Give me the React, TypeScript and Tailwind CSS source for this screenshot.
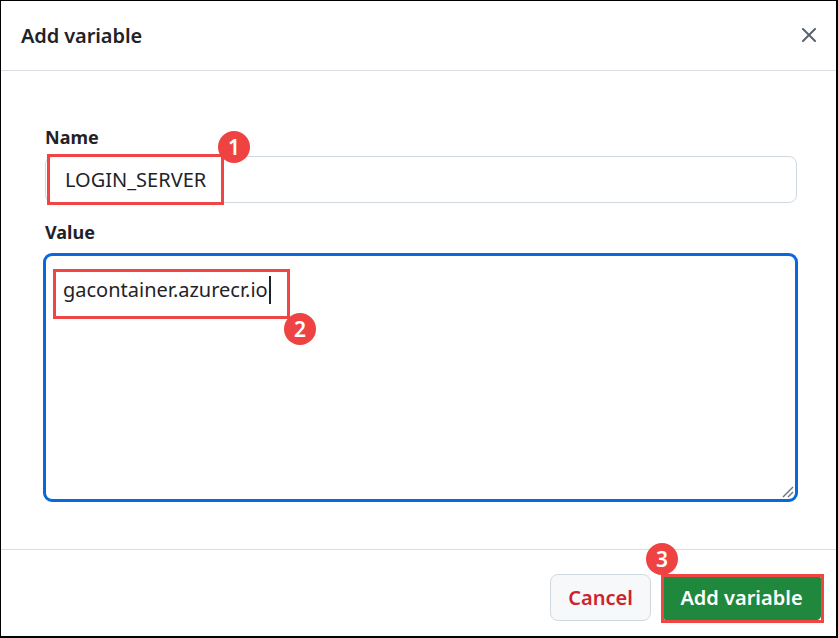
import React from "react";

function Badge({ n, cls }: { n: string; cls: string }) {
  return (
    <div
      className={
        "absolute w-[32px] h-[32px] rounded-full bg-[#ef4343] text-white flex items-center justify-center text-[21px] font-semibold leading-none " +
        cls
      }
    >
      {n}
    </div>
  );
}

export default function App() {
  return (
    <div className="relative w-[838px] h-[638px] bg-white border-l border-t border-r-2 border-b-2 border-black flex flex-col font-['Noto_Sans',sans-serif] text-[#1f2328] overflow-hidden">
      {/* Header */}
      <div className="h-[70px] shrink-0 border-b border-[#d8dee4] flex items-center justify-between pl-[20px] pr-[20px]">
        <h1 className="text-[20px] font-semibold leading-[28px] tracking-[-0.1px]">Add variable</h1>
        <svg width="14" height="14" viewBox="0 0 14 14" className="mt-[-2px]">
          <path d="M1 1 L13 13 M13 1 L1 13" stroke="#59636e" strokeWidth="2" strokeLinecap="round" />
        </svg>
      </div>

      {/* Body */}
      <div className="flex-1 flex flex-col pl-[44px] pr-[39px] pt-[54px]">
        <label className="text-[18px] font-bold leading-[24px]">Name</label>
        <div className="mt-[7px] h-[47px] rounded-[8px] border border-[#d1d9e0] bg-white flex items-center pl-[19px] text-[20px]">
          LOGIN_SERVER
        </div>
        <label className="mt-[17px] text-[18px] font-bold leading-[24px]">Value</label>
        <div className="mt-[9px] -ml-[2px] -mr-[1px] h-[249px] rounded-[9px] border-[3px] border-[#0969da] bg-white relative">
          <div className="pl-[17px] pt-[19px] text-[20px] leading-[30px] flex items-center">
            <span>gacontainer.azurecr.io</span>
            <span className="inline-block w-[2px] h-[28px] bg-[#1f2328] ml-[1px]" />
          </div>
          <svg className="absolute right-[1px] bottom-[1px]" width="13" height="13" viewBox="0 0 13 13">
            <path d="M2 12 L12 2" stroke="#6e7781" strokeWidth="1.5" />
            <path d="M7 12 L12 7" stroke="#6e7781" strokeWidth="1.5" />
          </svg>
        </div>
      </div>

      {/* Footer */}
      <div className="h-[87px] shrink-0 border-t border-[#d8dee4] flex justify-end gap-[10px] pr-[14px] pt-[24px]">
        <button className="w-[101px] h-[47px] rounded-[8px] border border-[#d1d9e0] bg-[#f6f8fa] text-[#cf222e] text-[20px] font-semibold">
          Cancel
        </button>
        <button className="w-[161px] h-[47px] rounded-[8px] bg-[#1f883d] text-white text-[20px] font-semibold">
          Add variable
        </button>
      </div>

      {/* Annotations */}
      <div className="absolute left-[46px] top-[153px] w-[177px] h-[51px] border-[3px] border-[#f04545]" />
      <div className="absolute left-[52px] top-[268px] w-[237px] h-[50px] border-[3px] border-[#f04545]" />
      <div className="absolute left-[660px] top-[573px] w-[163px] h-[49px] border-[3px] border-[#f04545]" />
      <Badge n="1" cls="left-[217px] top-[130px]" />
      <Badge n="2" cls="left-[283px] top-[312px]" />
      <Badge n="3" cls="left-[645px] top-[542px]" />
    </div>
  );
}
